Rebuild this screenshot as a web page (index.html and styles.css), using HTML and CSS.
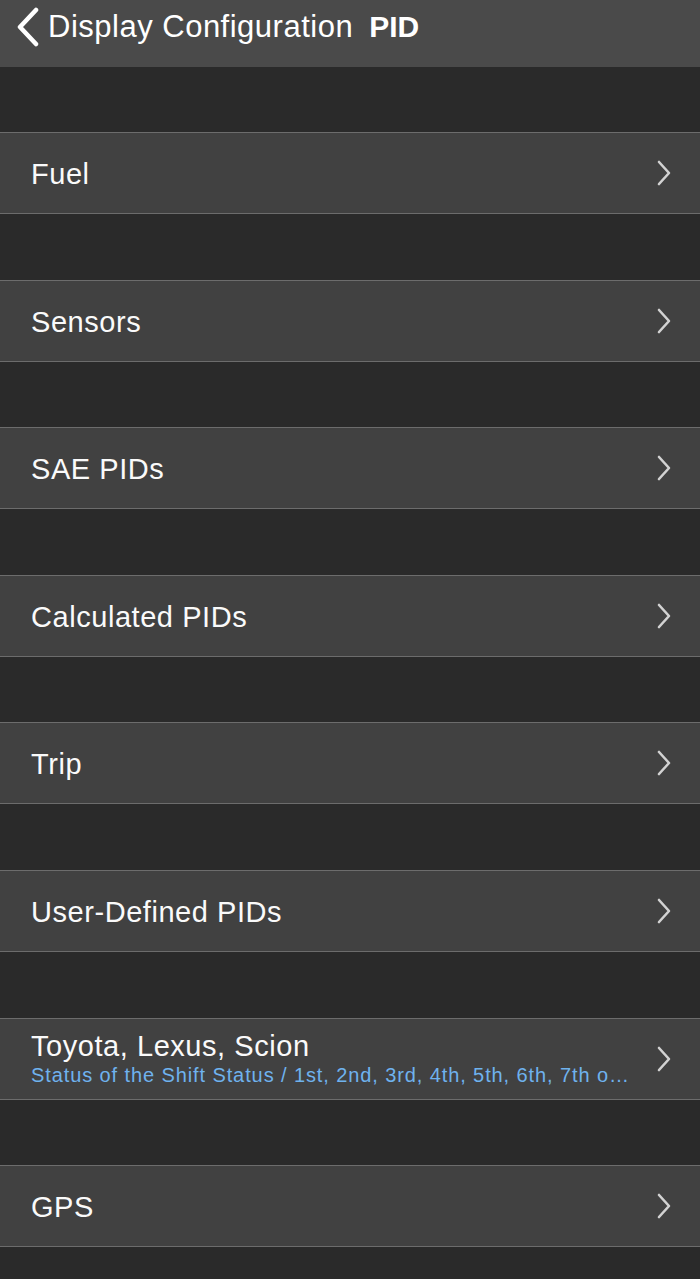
FILE: index.html
```html
<!DOCTYPE html>
<html>
<head>
<meta charset="utf-8">
<link rel="stylesheet" href="styles.css">
</head>
<body>
<header class="nav">
  <svg class="back" width="26" height="40" viewBox="0 0 26 40"><path d="M21 3 L5 20 L21 37" fill="none" stroke="#fff" stroke-width="4.5" stroke-linecap="round" stroke-linejoin="round"/></svg>
  <span class="nav-back">Display Configuration</span>
  <span class="nav-title">PID</span>
</header>
<main class="list">
  <div class="row"><span class="label">Fuel</span><svg class="chev" width="16" height="28" viewBox="0 0 16 28"><path d="M3 3 L13 14 L3 25" fill="none" stroke="#d2d2d2" stroke-width="2.6" stroke-linecap="round" stroke-linejoin="round"/></svg></div>
  <div class="row"><span class="label">Sensors</span><svg class="chev" width="16" height="28" viewBox="0 0 16 28"><path d="M3 3 L13 14 L3 25" fill="none" stroke="#d2d2d2" stroke-width="2.6" stroke-linecap="round" stroke-linejoin="round"/></svg></div>
  <div class="row"><span class="label">SAE PIDs</span><svg class="chev" width="16" height="28" viewBox="0 0 16 28"><path d="M3 3 L13 14 L3 25" fill="none" stroke="#d2d2d2" stroke-width="2.6" stroke-linecap="round" stroke-linejoin="round"/></svg></div>
  <div class="row"><span class="label">Calculated PIDs</span><svg class="chev" width="16" height="28" viewBox="0 0 16 28"><path d="M3 3 L13 14 L3 25" fill="none" stroke="#d2d2d2" stroke-width="2.6" stroke-linecap="round" stroke-linejoin="round"/></svg></div>
  <div class="row"><span class="label">Trip</span><svg class="chev" width="16" height="28" viewBox="0 0 16 28"><path d="M3 3 L13 14 L3 25" fill="none" stroke="#d2d2d2" stroke-width="2.6" stroke-linecap="round" stroke-linejoin="round"/></svg></div>
  <div class="row"><span class="label">User-Defined PIDs</span><svg class="chev" width="16" height="28" viewBox="0 0 16 28"><path d="M3 3 L13 14 L3 25" fill="none" stroke="#d2d2d2" stroke-width="2.6" stroke-linecap="round" stroke-linejoin="round"/></svg></div>
  <div class="row">
    <div class="text">
      <span class="label">Toyota, Lexus, Scion</span>
      <span class="sub">Status of the Shift Status / 1st, 2nd, 3rd, 4th, 5th, 6th, 7th or 8th gear</span>
    </div>
    <svg class="chev" width="16" height="28" viewBox="0 0 16 28"><path d="M3 3 L13 14 L3 25" fill="none" stroke="#d2d2d2" stroke-width="2.6" stroke-linecap="round" stroke-linejoin="round"/></svg>
  </div>
  <div class="row"><span class="label">GPS</span><svg class="chev" width="16" height="28" viewBox="0 0 16 28"><path d="M3 3 L13 14 L3 25" fill="none" stroke="#d2d2d2" stroke-width="2.6" stroke-linecap="round" stroke-linejoin="round"/></svg></div>
</main>
</body>
</html>
```

FILE: styles.css
```css
html, body {
  margin: 0;
  padding: 0;
  background: #2a2a2a;
  font-family: "Liberation Sans", Arial, sans-serif;
  color: #fff;
}

.nav {
  height: 67px;
  background: #4a4a4a;
  display: flex;
  align-items: center;
  padding-left: 15px;
  box-sizing: border-box;
  padding-bottom: 13px;
}

.back {
  flex: none;
  margin-right: 7px;
}

.nav-back {
  font-size: 31px;
  letter-spacing: 0.5px;
  margin-right: 16px;
}

.nav-title {
  font-size: 30px;
  font-weight: bold;
}

.list {
  display: flex;
  flex-direction: column;
  padding-top: 65px;
  gap: 65.6px;
}

.row {
  height: 82px;
  box-sizing: border-box;
  background: #414141;
  border-top: 1.5px solid #6c6c6c;
  border-bottom: 1.5px solid #6c6c6c;
  display: flex;
  align-items: center;
  padding: 3px 28px 0 31px;
}

.label {
  font-size: 29px;
  letter-spacing: 0.55px;
  flex: 1;
  color: #fafafa;
}

.text {
  flex: 1;
  min-width: 0;
  display: flex;
  flex-direction: column;
  padding-right: 20px;
  margin-top: -4px;
}

.text .label {
  flex: none;
  line-height: 33px;
}

.sub {
  font-size: 20px;
  letter-spacing: 0.9px;
  color: #6fb2ee;
  white-space: nowrap;
  overflow: hidden;
  text-overflow: ellipsis;
  line-height: 24px;
}

.chev {
  flex: none;
  margin-top: -3px;
}
```
